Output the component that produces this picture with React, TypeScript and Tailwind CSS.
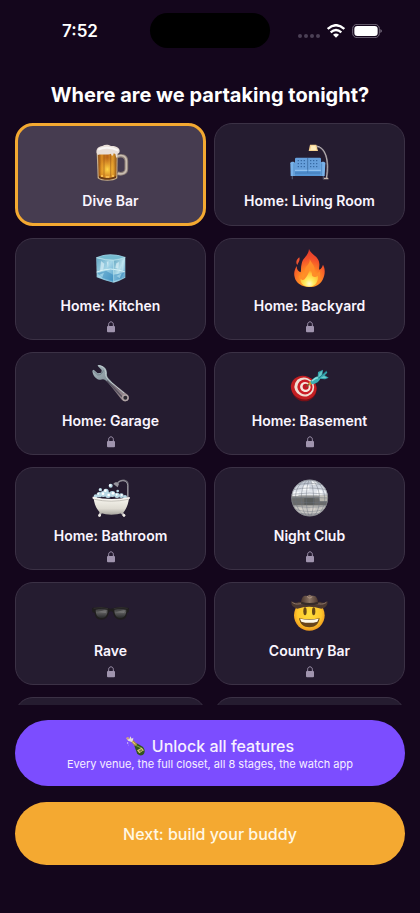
import { useState, type ReactNode } from "react";

function BeerIcon() {
  return (
    <svg viewBox="0 0 120 120" className="size-10" aria-hidden="true">
      <defs>
        <linearGradient id="beer" x1="0" y1="0" x2="1" y2="0">
          <stop offset="0" stopColor="#8a4a12" />
          <stop offset="0.2" stopColor="#d98a22" />
          <stop offset="0.5" stopColor="#b8641a" />
          <stop offset="0.8" stopColor="#e09a2c" />
          <stop offset="1" stopColor="#8f5518" />
        </linearGradient>
        <radialGradient id="beerGlow" cx="0.5" cy="0.65" r="0.45">
          <stop offset="0" stopColor="#ffd84a" />
          <stop offset="1" stopColor="#ffb52e" stopOpacity="0" />
        </radialGradient>
      </defs>
      <path d="M78 41 C92 35 106 39 106 54 V78 C106 90 94 95 80 91" fill="none" stroke="#8d7f77" strokeWidth="11" />
      <path d="M78 40 C93 34 106 39 106 54 V78 C106 90 94 95 80 91" fill="none" stroke="#c9bdb2" strokeWidth="5" />
      <path d="M17 27 L80 27 L79 106 C68 116 30 116 20 106 Z" fill="#c9b08b" />
      <path d="M21 28 L77 28 L76 102 C64 108 33 108 23 102 Z" fill="url(#beer)" />
      <path d="M21 28 L77 28 L76 102 C64 108 33 108 23 102 Z" fill="url(#beerGlow)" />
      <path d="M39 34 V101 M59 34 V101" stroke="#7c3f10" strokeWidth="2" opacity="0.6" />
      <path d="M24 98 C38 106 62 106 75 98 V105 C60 112 36 112 24 105 Z" fill="#6b3b14" />
      <path d="M30 99 H36 M44 102 H55 M63 99 H69" stroke="#ffc95c" strokeWidth="4" />
      <path d="M17 30 C14 18 23 10 34 9 C43 3 53 5 60 9 C72 8 86 13 86 24 C86 31 81 33 79 32 V43 C76 48 74 39 73 33 L68 31 C66 42 61 39 60 32 C47 37 29 32 20 36 Z" fill="#e9dfd9" />
      <path d="M22 20 C35 12 61 11 82 23" fill="none" stroke="#fff" strokeWidth="6" opacity="0.7" />
    </svg>
  );
}

function SofaIcon() {
  return (
    <svg viewBox="0 0 120 120" className="size-10" aria-hidden="true">
      <path d="M79 10 C106 13 119 50 110 105" fill="none" stroke="#777078" strokeWidth="5" />
      <path d="M79 9 C106 12 118 50 109 105" fill="none" stroke="#d6ced0" strokeWidth="2" />
      <path d="M101 104 H114 L116 109 H99 Z" fill="#c9b9ae" />
      <path d="M60 5 H79 L84 24 H56 Z" fill="#f6d291" />
      <path d="M64 8 H76 L79 21 H61 Z" fill="#ffedbd" />
      <path d="M7 96 V109 M100 96 V109" stroke="#4d5269" strokeWidth="4" />
      <rect x="15" y="44" width="78" height="45" rx="4" fill="#67a0dc" />
      <path d="M53 45 V84" stroke="#315f96" strokeWidth="2" />
      <path d="M23 53 H48 M23 62 H48 M23 71 H48 M60 53 H87 M60 62 H87 M60 71 H87" stroke="#2f609a" strokeWidth="3" strokeDasharray="4 5" />
      <rect x="9" y="81" width="90" height="18" fill="#5594d4" />
      <path d="M13 82 H53 M55 82 H94" stroke="#9ccaf5" strokeWidth="3" />
      <path d="M53 82 V89 M12 90 H96" stroke="#376da7" strokeWidth="2" />
      <path d="M1 61 C1 55 15 55 15 61 V99 H2 Z" fill="#79b2e9" />
      <path d="M92 61 C92 55 106 55 106 61 L104 99 H92 Z" fill="#79b2e9" />
      <path d="M12 61 V98 M95 61 V98" stroke="#3c78b5" strokeWidth="2" />
    </svg>
  );
}

function IceIcon() {
  return (
    <svg viewBox="0 0 120 120" className="size-10" aria-hidden="true">
      <defs>
        <linearGradient id="iceL" x1="0" y1="0" x2="1" y2="1">
          <stop offset="0" stopColor="#65a7c4" />
          <stop offset="0.5" stopColor="#a4d5e7" />
          <stop offset="1" stopColor="#4b9ac8" />
        </linearGradient>
        <linearGradient id="iceR" x1="0" y1="0" x2="1" y2="1">
          <stop offset="0" stopColor="#5aa0bd" />
          <stop offset="0.5" stopColor="#b9e1ed" />
          <stop offset="1" stopColor="#3688be" />
        </linearGradient>
      </defs>
      <path d="M16 28 Q36 19 58 19 Q84 20 103 27 L103 89 Q86 99 68 104 Q40 98 17 88 Z" fill="#92c7da" />
      <path d="M17 31 Q42 37 67 37 L68 102 Q40 96 19 86 Z" fill="url(#iceL)" />
      <path d="M68 37 Q85 35 102 30 L101 87 Q86 97 69 102 Z" fill="url(#iceR)" />
      <path d="M23 27 Q57 16 98 27 Q76 36 60 34 Q39 34 23 27 Z" fill="#75bbd0" />
      <path d="M17 72 Q40 64 59 63 Q83 65 101 71" fill="none" stroke="#d6f2f7" strokeWidth="3" />
      <path d="M19 76 L45 68 L66 80 L100 74 L91 91 L69 100 L36 91 Z" fill="#368bbd" opacity="0.55" />
      <path d="M30 39 L40 47 L37 64 L27 71 Z M76 46 L84 42 L82 62 L73 59 Z M47 41 L53 40 L51 60 Z" fill="#e6f7fb" opacity="0.6" />
      <path d="M94 38 L98 34 V65 L91 73 Z M25 80 L39 74 L34 88 Z M77 84 L92 76 L86 91 Z" fill="#c6eef8" opacity="0.5" />
      <path d="M16 29 Q43 37 68 37 Q87 35 103 28 M68 37 V102" fill="none" stroke="#c0e8ef" strokeWidth="2" />
    </svg>
  );
}

function FireIcon() {
  return (
    <svg viewBox="0 0 120 120" className="size-10" aria-hidden="true">
      <defs>
        <radialGradient id="fire" cx="0.5" cy="0.88" r="0.85">
          <stop offset="0" stopColor="#ffb52b" />
          <stop offset="0.4" stopColor="#ff8a24" />
          <stop offset="0.72" stopColor="#f4512a" />
          <stop offset="1" stopColor="#e13a2c" />
        </radialGradient>
        <radialGradient id="flame" cx="0.5" cy="0.85" r="0.7">
          <stop offset="0" stopColor="#fffbd0" />
          <stop offset="0.35" stopColor="#ffed60" />
          <stop offset="0.8" stopColor="#ffc334" />
          <stop offset="1" stopColor="#ff9426" />
        </radialGradient>
      </defs>
      <path d="M57 3 C62 20 87 24 88 47 C89 53 86 61 88 65 C94 63 97 56 99 50 C107 64 105 82 98 95 C88 113 72 118 57 117 C36 117 18 106 14 88 C10 73 15 64 20 54 C20 65 25 70 32 73 C34 64 32 58 35 47 C38 29 55 25 57 3 Z" fill="url(#fire)" />
      <path d="M28 28 C31 38 25 43 22 51 C16 43 20 34 28 28 Z" fill="#ee5230" />
      <path d="M59 33 C63 44 74 51 74 64 C74 69 72 74 77 79 C84 76 86 72 89 70 C95 90 82 114 57 114 C36 114 24 99 27 82 C32 86 34 89 40 88 C47 73 42 61 51 53 C57 47 60 41 59 33 Z" fill="#ff8d29" />
      <path d="M58 59 C64 67 66 73 66 82 C68 87 76 89 84 83 C85 101 77 115 57 116 C38 116 30 102 32 92 C36 97 42 98 46 91 C53 81 59 73 58 59 Z" fill="url(#flame)" />
    </svg>
  );
}

function WrenchIcon() {
  return (
    <svg viewBox="0 0 120 120" className="size-10" aria-hidden="true">
      <defs>
        <linearGradient id="steel" x1="0" y1="0" x2="1" y2="1">
          <stop offset="0" stopColor="#a9bac0" />
          <stop offset="0.45" stopColor="#839098" />
          <stop offset="0.6" stopColor="#786d77" />
          <stop offset="1" stopColor="#a69698" />
        </linearGradient>
      </defs>
      <path d="M20 6 C35 5 50 16 48 34 C47 42 54 48 65 59 L107 93 C114 98 116 107 111 112 C104 118 96 115 91 109 L57 66 C49 57 43 50 36 49 C20 54 6 42 4 23 L8 20 L20 31 L31 29 L32 21 L21 10 Z" fill="url(#steel)" />
      <path d="M23 8 C37 9 46 20 44 34 C44 41 49 48 57 55 L100 91" fill="none" stroke="#c3cfd2" strokeWidth="3" />
      <path d="M7 24 L20 36 C29 36 35 31 37 22" fill="none" stroke="#5e6e79" strokeWidth="2" />
      <path d="M48 53 L93 101" stroke="#55505d" strokeWidth="4" />
      <circle cx="103" cy="104" r="8" fill="#2c2931" stroke="#afa3a5" strokeWidth="4" />
    </svg>
  );
}

function TargetIcon() {
  return (
    <svg viewBox="0 0 120 120" className="size-10" aria-hidden="true">
      <ellipse cx="43" cy="78" rx="37" ry="37" fill="#781017" />
      <ellipse cx="41" cy="74" rx="39" ry="35" transform="rotate(24 41 74)" fill="#c31e22" />
      <ellipse cx="43" cy="72" rx="30" ry="28" transform="rotate(24 43 72)" fill="#f0ddd2" />
      <ellipse cx="45" cy="72" rx="23" ry="22" transform="rotate(24 45 72)" fill="#ca1d25" />
      <ellipse cx="46" cy="72" rx="16" ry="15" transform="rotate(24 46 72)" fill="#f6e6dc" />
      <ellipse cx="47" cy="71" rx="9" ry="9" fill="#c21822" />
      <path d="M48 71 L65 57" stroke="#6c5c39" strokeWidth="4" />
      <path d="M55 61 L63 54 L68 61 L59 68 Z" fill="#d29a29" />
      <path d="M61 56 C71 43 81 39 87 40 L91 46 C89 56 77 63 65 64 Z" fill="#3aaeb4" />
      <path d="M66 54 C75 46 82 43 86 45" fill="none" stroke="#91e3df" strokeWidth="4" />
      <path d="M83 43 L84 27 L99 20 L97 35 L109 24 L112 29 L104 37 L116 44 L105 49 L89 47 Z" fill="#36a5ad" />
      <path d="M85 43 L88 31 L97 23 L94 38 Z M91 45 L102 39 L112 45" fill="#69cbc9" />
      <path d="M85 46 L110 24" stroke="#177078" strokeWidth="2" />
    </svg>
  );
}

function BathIcon() {
  return (
    <svg viewBox="0 0 120 120" className="size-10" aria-hidden="true">
      <defs>
        <linearGradient id="tub" x1="0" y1="0" x2="0" y2="1">
          <stop offset="0" stopColor="#f9f7f0" />
          <stop offset="0.65" stopColor="#dedbd2" />
          <stop offset="1" stopColor="#a9a69f" />
        </linearGradient>
      </defs>
      <path d="M111 62 V22 C111 4 90 3 80 15" fill="none" stroke="#686570" strokeWidth="5" />
      <path d="M110 62 V22 C109 6 91 4 80 14" fill="none" stroke="#b9b6bc" strokeWidth="2" />
      <path d="M67 18 C71 11 80 11 84 18 L80 28 Z" fill="#96949d" />
      <path d="M30 102 L25 113 M91 102 L99 113" stroke="#b4b0b1" strokeWidth="7" strokeLinecap="round" />
      <circle cx="26" cy="112" r="4" fill="#eeeae6" />
      <circle cx="99" cy="112" r="4" fill="#eeeae6" />
      <g fill="#b8d8e4">
        <circle cx="14" cy="55" r="6" />
        <circle cx="25" cy="50" r="8" />
        <circle cx="37" cy="48" r="9" />
        <circle cx="51" cy="51" r="9" />
        <circle cx="64" cy="48" r="9" />
        <circle cx="78" cy="52" r="8" />
        <circle cx="91" cy="53" r="7" />
        <circle cx="102" cy="57" r="6" />
        <circle cx="28" cy="35" r="5" />
        <circle cx="45" cy="40" r="8" />
        <circle cx="59" cy="23" r="6" />
        <circle cx="80" cy="39" r="4" />
      </g>
      <g fill="#fff">
        <circle cx="22" cy="47" r="3" />
        <circle cx="36" cy="47" r="4" />
        <circle cx="43" cy="38" r="4" />
        <circle cx="57" cy="22" r="3" />
        <circle cx="27" cy="34" r="2" />
        <circle cx="53" cy="51" r="4" />
        <circle cx="66" cy="46" r="4" />
        <circle cx="77" cy="50" r="3" />
        <circle cx="92" cy="51" r="3" />
      </g>
      <path d="M8 58 Q60 73 114 60 C112 80 105 94 96 105 Q60 115 28 105 C16 93 9 78 8 58 Z" fill="url(#tub)" />
      <path d="M5 56 Q60 69 116 57 Q119 61 114 64 Q60 75 8 64 Q2 61 5 56 Z" fill="#f8f5ef" />
      <path d="M10 64 Q60 75 112 64" fill="none" stroke="#a9a69f" strokeWidth="2" />
    </svg>
  );
}

function DiscoIcon() {
  return (
    <svg viewBox="0 0 120 120" className="size-10" aria-hidden="true">
      <defs>
        <linearGradient id="disco" x1="0" y1="0" x2="0" y2="1">
          <stop offset="0" stopColor="#b9c0cc" />
          <stop offset="0.4" stopColor="#eef1f7" />
          <stop offset="0.44" stopColor="#a3a4a4" />
          <stop offset="0.52" stopColor="#6a6b6b" />
          <stop offset="0.68" stopColor="#6a6b6b" />
          <stop offset="0.72" stopColor="#bdbcb8" />
          <stop offset="0.88" stopColor="#d0cecb" />
          <stop offset="1" stopColor="#918f95" />
        </linearGradient>
        <clipPath id="ball">
          <circle cx="59" cy="60" r="55" />
        </clipPath>
      </defs>
      <circle cx="59" cy="60" r="55" fill="url(#disco)" />
      <g clipPath="url(#ball)">
        <path d="M12 42 H27 L25 54 H6 Z M40 22 H58 V37 H37 Z M63 10 H77 L81 21 H64 Z M81 37 H95 L98 52 H82 Z" fill="#fff" opacity="0.75" />
        <path d="M43 60 H73 V80 H43 Z" fill="#4e5151" opacity="0.6" />
        <path d="M87 53 H112 V70 H89 Z" fill="#d9d6ca" opacity="0.7" />
        <path d="M26 88 H40 L42 99 H31 Z M61 87 H77 L74 100 H61 Z" fill="#e0d8d0" opacity="0.6" />
        <path
          d="M20 20 Q59 11 98 20 M9 35 Q59 25 110 35 M3 49 Q59 41 115 49 M3 60 Q59 55 115 60 M4 71 Q59 78 114 71 M9 83 Q59 93 110 83 M18 95 Q59 106 102 95 M33 106 Q59 113 86 106"
          fill="none" stroke="#6b727d" strokeWidth="2" opacity="0.65"
        />
        <path
          d="M50 4 C7 22 5 90 46 115 M54 4 C28 24 27 94 52 115 M58 4 C46 30 45 91 58 115 M61 4 C73 30 75 91 62 115 M65 4 C94 24 97 94 70 115 M69 4 C113 24 116 92 76 115"
          fill="none" stroke="#6b727d" strokeWidth="2" opacity="0.65"
        />
      </g>
      <circle cx="59" cy="60" r="54" fill="none" stroke="#85868d" strokeWidth="2" />
    </svg>
  );
}

function SunglassesIcon() {
  return (
    <svg viewBox="0 0 120 120" className="size-10" aria-hidden="true">
      <defs>
        <linearGradient id="lens" x1="0" y1="0" x2="0" y2="1">
          <stop offset="0" stopColor="#353536" />
          <stop offset="0.4" stopColor="#5e5e5e" />
          <stop offset="1" stopColor="#272829" />
        </linearGradient>
      </defs>
      <path d="M3 45 Q30 39 51 45 Q59 49 68 45 Q88 39 114 45 L113 57 L108 60 C107 73 102 80 89 80 C75 80 69 73 66 58 Q60 52 54 58 C51 73 44 80 31 80 C18 80 12 73 11 60 L4 57 Z" fill="#1f1d1e" />
      <path d="M14 50 Q32 44 50 50 C50 65 44 75 32 75 C20 75 14 66 14 50 Z" fill="url(#lens)" />
      <path d="M70 50 Q89 44 106 50 C106 66 99 75 88 75 C76 75 70 65 70 50 Z" fill="url(#lens)" />
      <path d="M20 57 L41 51 L48 52 L44 60 Z M75 58 L97 51 L104 52 L99 60 Z" fill="#8a8a8a" opacity="0.5" />
      <path d="M8 46 Q30 41 51 47 M68 47 Q90 41 110 46" fill="none" stroke="#3a3836" strokeWidth="2" />
    </svg>
  );
}

function CowboyIcon() {
  return (
    <svg viewBox="0 0 120 120" className="size-10" aria-hidden="true">
      <defs>
        <radialGradient id="face" cx="0.5" cy="0.45" r="0.6">
          <stop offset="0" stopColor="#ffdf3d" />
          <stop offset="0.65" stopColor="#ffc72b" />
          <stop offset="1" stopColor="#e88a19" />
        </radialGradient>
        <linearGradient id="hat" x1="0" y1="0" x2="1" y2="0">
          <stop offset="0" stopColor="#49352d" />
          <stop offset="0.5" stopColor="#8b7464" />
          <stop offset="1" stopColor="#49352d" />
        </linearGradient>
      </defs>
      <circle cx="58" cy="67" r="46" fill="url(#face)" />
      <path d="M4 24 C12 30 19 31 27 26 Q57 36 90 26 C99 31 105 29 112 24 C115 36 106 45 94 47 Q57 36 22 47 C10 44 2 36 4 24 Z" fill="#4c3931" />
      <path d="M7 28 C20 39 31 28 57 33 C83 28 96 39 109 28" fill="none" stroke="#8c7467" strokeWidth="3" />
      <path d="M33 31 C34 14 40 6 51 9 L59 5 L67 9 C78 6 83 17 85 31 Q59 41 33 31 Z" fill="url(#hat)" />
      <path d="M34 26 Q59 34 84 26 L85 32 Q59 41 33 32 Z" fill="#352b29" />
      <path d="M51 10 Q59 20 67 10" fill="none" stroke="#b49987" strokeWidth="3" />
      <ellipse cx="45" cy="55" rx="5" ry="12" fill="#664817" />
      <ellipse cx="71" cy="55" rx="5" ry="12" fill="#664817" />
      <path d="M27 76 Q58 82 89 76 C86 94 75 103 58 103 C41 103 30 94 27 76 Z" fill="#694519" />
      <path d="M30 77 Q58 83 86 77 L82 86 Q58 93 34 86 Z" fill="#fff9e6" />
    </svg>
  );
}

function ChampagneIcon() {
  return (
    <svg viewBox="0 0 60 60" className="size-5" aria-hidden="true">
      <path d="M24 27 L32 22 L50 32 C58 40 58 51 50 57 C44 60 37 58 33 52 Z" fill="#31551e" />
      <path d="M29 28 L48 37 L53 44" fill="none" stroke="#83a64e" strokeWidth="3" />
      <path d="M33 43 L47 35 L53 43 L40 52 Z" fill="#dfc875" />
      <path d="M38 44 L46 39 L50 43 L42 48 Z" fill="#6e8140" />
      <path d="M15 17 L22 13 L34 25 L27 31 Z" fill="#ad8e45" />
      <path d="M18 16 L27 25" stroke="#f5df94" strokeWidth="3" />
      <path d="M17 18 L6 14 L1 6 L10 9 L13 1 L17 8 L22 5 L21 13 Z" fill="#e9dcd9" />
      <circle cx="5" cy="7" r="4" fill="#c89c89" />
      <circle cx="5" cy="21" r="2" fill="#e9dcef" />
      <circle cx="8" cy="27" r="1" fill="#fff" />
    </svg>
  );
}

function LockIcon() {
  return (
    <svg viewBox="0 0 24 36" className="h-3 w-2" role="img" aria-label="Locked">
      <path d="M5 17 V10 C5 0 19 0 19 10 V17" fill="none" stroke="#a094ae" strokeWidth="3" />
      <rect x="0" y="15" width="24" height="19" rx="3" fill="#a094ae" />
    </svg>
  );
}

function StatusBar() {
  return (
    <header className="grid shrink-0 grid-cols-[1fr_120px_1fr] items-center px-[10px] pt-[13px] text-white">
      <span className="text-center text-[17px] leading-5 font-semibold">7:52</span>
      <div className="h-[35px] rounded-full bg-black" />
      <div className="flex items-center justify-center gap-[7px]">
        <svg viewBox="0 0 22 14" className="h-[14px] w-[22px]" aria-hidden="true" fill="#4b4055">
          <circle cx="2" cy="12" r="2" />
          <circle cx="8" cy="12" r="2" />
          <circle cx="14" cy="12" r="2" />
          <circle cx="20" cy="12" r="2" />
        </svg>
        <svg viewBox="0 0 54 42" className="h-[14px] w-[18px]" aria-hidden="true" fill="none" stroke="#fff" strokeWidth="7">
          <path d="M2 15 Q27 -8 52 15" />
          <path d="M11 25 Q27 11 43 25" />
          <path d="M18 32 Q27 25 36 32 L27 41 Z" fill="#fff" stroke="none" />
        </svg>
        <svg viewBox="0 0 90 42" className="h-[14px] w-[30px]" aria-hidden="true">
          <rect x="2" y="1" width="80" height="40" rx="13" fill="none" stroke="#716879" strokeWidth="3" />
          <rect x="7" y="6" width="70" height="30" rx="9" fill="#fff" />
          <path d="M85 15 Q90 18 90 21 Q90 24 85 27 Z" fill="#716879" />
        </svg>
      </div>
    </header>
  );
}

type Venue = {
  name: string;
  icon: ReactNode;
  locked: boolean;
};

const venues: Venue[] = [
  { name: "Dive Bar", icon: <BeerIcon />, locked: false },
  { name: "Home: Living Room", icon: <SofaIcon />, locked: false },
  { name: "Home: Kitchen", icon: <IceIcon />, locked: true },
  { name: "Home: Backyard", icon: <FireIcon />, locked: true },
  { name: "Home: Garage", icon: <WrenchIcon />, locked: true },
  { name: "Home: Basement", icon: <TargetIcon />, locked: true },
  { name: "Home: Bathroom", icon: <BathIcon />, locked: true },
  { name: "Night Club", icon: <DiscoIcon />, locked: true },
  { name: "Rave", icon: <SunglassesIcon />, locked: true },
  { name: "Country Bar", icon: <CowboyIcon />, locked: true },
];

function VenueCard({ venue, selected, onSelect }: { venue: Venue; selected: boolean; onSelect: () => void }) {
  return (
    <button
      type="button"
      onClick={onSelect}
      aria-pressed={selected}
      className={`flex flex-col items-center justify-center rounded-[18px] ${
        selected ? "border-3 border-[#f4a931] bg-[#463c50]" : "border border-[#3b3145] bg-[#251c30]"
      }`}
    >
      <span className="flex h-[46px] items-center">{venue.icon}</span>
      <span className="mt-[6px] text-[14px] leading-[18px] font-semibold text-[#faf5ff]">{venue.name}</span>
      {venue.locked && (
        <span className="mt-[6px]">
          <LockIcon />
        </span>
      )}
    </button>
  );
}

export default function App() {
  const [selected, setSelected] = useState("Dive Bar");

  const pick = (venue: Venue) => {
    if (!venue.locked) setSelected(venue.name);
  };

  return (
    <div className="flex h-screen flex-col overflow-hidden bg-[#14061c] font-[Inter,sans-serif]">
      <StatusBar />
      <h1 className="mt-[33px] mb-[14px] shrink-0 text-center text-[20px] leading-7 font-bold text-white">
        Where are we partaking tonight?
      </h1>

      <main className="min-h-0 flex-1 overflow-y-auto px-[15px] [scrollbar-width:none]">
        <div className="grid auto-rows-[minmax(103px,auto)] grid-cols-2 grid-rows-[minmax(103px,auto)_minmax(102px,auto)] gap-x-2 gap-y-3 [grid-template-rows:repeat(2,minmax(103px,auto))_repeat(3,minmax(102px,auto))]">
          {venues.map((v) => (
            <VenueCard key={v.name} venue={v} selected={v.name === selected} onSelect={() => pick(v)} />
          ))}
          <div className="rounded-[18px] border border-[#3b3145] bg-[#251c30]" />
          <div className="rounded-[18px] border border-[#3b3145] bg-[#251c30]" />
        </div>
      </main>

      <footer className="flex shrink-0 flex-col gap-4 px-[15px] pt-[15px] pb-12">
        <button type="button" className="flex h-[66px] flex-col items-center justify-center rounded-full bg-[#7c4dff] pt-0.5 text-[#f7f0ff]">
          <span className="flex items-center gap-[6px] text-[16px] leading-5 font-medium">
            <ChampagneIcon />
            Unlock all features
          </span>
          <span className="text-[11px] leading-4">Every venue, the full closet, all 8 stages, the watch app</span>
        </button>
        <button type="button" className="h-[63px] rounded-full bg-[#f4a931] text-[16px] leading-5 font-medium text-[#fff8e4]">
          Next: build your buddy
        </button>
      </footer>
    </div>
  );
}
